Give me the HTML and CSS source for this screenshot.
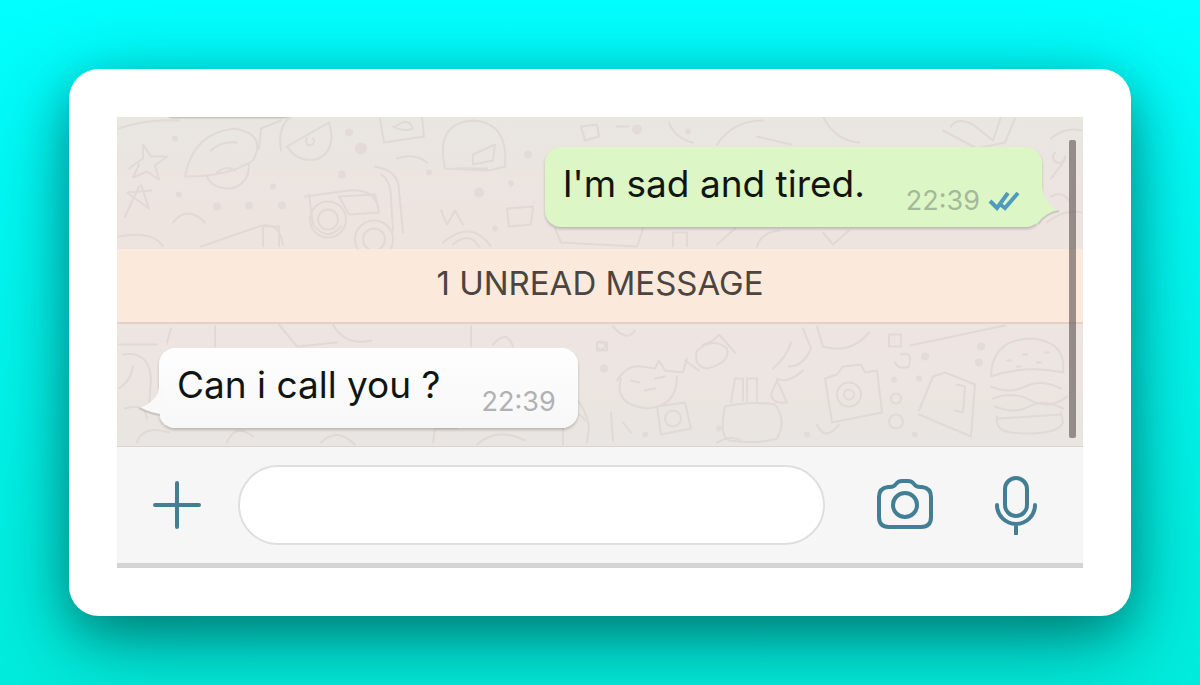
FILE: index.html
```html
<!DOCTYPE html>
<html lang="en">
<head>
    <meta charset="UTF-8">
    <meta name="viewport" content="width=device-width, initial-scale=1.0">
    <title>Chat</title>
    <link rel="stylesheet" href="styles.css">
</head>
<body>
    <main class="card">
        <div class="phone">
            <section class="chat">
                <!-- doodle wallpaper -->
                <svg class="wallpaper" viewBox="0 0 966 330" preserveAspectRatio="xMidYMid slice" aria-hidden="true">
                    <path class="edge" d="M50 0h124q-4 2-10 2H60q-8 0-10-2z"/>
                    <g class="doodles">
                        <path d="M2 12 Q30 2 62 4M12 52l14-10 0-14 8 12 16 0-12 9 4 14-12-8-14 6 6-13M22 70l-14 30M24 68l8 24-22-16 24-2"/>
                        <path d="M68 60q8-44 50-48 32 6 18 32-24 16-66 16M94 34q10-10 26-8M90 60q4 12 24 12 18-4 18-24M100 56q10-8 18-2"/>
                        <path d="M164 34q-4-24 10-34M170 30l42-24q8 26-10 36-20 6-32-12M190 22a4 4 0 1 0 6 0M142 32l2-20 20-8"/>
                        <path d="M263 2l4 24 40-6-2-20M278 10q14-10 18 2-10 4-20-2M280 42q18-6 30 4"/>
                        <path d="M188 80l44-6q28-2 30 22M192 78l4 30q14 18 28 2M258 50q24 4 24 24l4 42M264 58q10 6 10 24l2 32M222 80l36-2 4 18-30 2z"/>
                        <circle cx="211" cy="103" r="18"/><circle cx="211" cy="103" r="10"/>
                        <circle cx="257" cy="123" r="19"/><circle cx="257" cy="123" r="11"/>
                        <path d="M84 130l58-20q20-6 24 18M146 130v-20h16v20M2 120q34-6 44 10M56 106q14-18 32 0"/>
                        <path d="M328 52q-10-46 28-48 36 2 32 46l-16 4zM356 38l22-10-2 16-20 4zM340 52h30"/>
                        <path d="M324 94l6 14 8-14 8 14M390 92l26-2-2 18-22 2zM326 126q28-24 48 4M336 128q16-14 26 2"/>
                        <path d="M464 10l16-2 2 12-14 4zM500 10h12M552 6q6 16 24 20M600 28q16-24 46-24M640 20l34 8M706 0q12 24 36 26"/>
                        <path d="M438 112l6 14 76 4 6-18M556 130v-14h14v14M600 128l18-16M640 130q4-14 22-16M706 116l10 12 16-14"/>
                        <path d="M834 10q6-10 22-2l20 16 8-24M826 14l34 18 28-6 10-24M934 22q14-12 30-8M930 106q18-14 34-10"/>
                        <path d="M934 62l12-16M938 36a6 6 0 1 0 10 4M934 80q12-6 18 4"/>
                        <path d="M2 228h38M6 238q26-4 28 24l-2 30M98 210v20M54 212l-4 14M162 208l18 22 40-4M216 208q12 22 38 16"/>
                        <path d="M2 272q12-8 14-22M8 292q20-6 22 10M20 326q6-18 32-10M110 326q8-20 26-6M204 326q16-16 34 2M316 326l2-14h22M360 328q20-18 48-4"/>
                        <path d="M354 210v20M376 228q14-16 20 2M496 210q14 16 22 4M480 226h10v8h-10z"/>
                        <path d="M500 264q10-16 24-14l14 2 4-8 6 10 18 2 4-14M504 262q-8 26 26 30 30-2 30-32M514 264l8 2M538 262l10-2M528 274l10-2"/>
                        <path d="M568 244l14 10M580 234q16-14 30-2 4 14-20 20-14-2-10-18M586 228q10-2 16-10l16 18"/>
                        <path d="M540 290l28-4 6 26-30 6z"/><circle cx="556" cy="302" r="8"/>
                        <path d="M608 290q-6 30 4 34 28 4 48-2 10-18-2-34-26-4-50 2M614 286l4-24h8v22M630 284v-22h10v22"/>
                        <path d="M660 264l10 22q-14 2-16-8zM656 252q14-12 18-26M672 250q14 0 22-18l-8-20M660 262q10 6 26-8"/>
                        <path d="M708 262l12-4 6-8 18-2 4 8 12-2 5 42-50 10zM700 210l6 20q28 8 46-14"/>
                        <circle cx="732" cy="278" r="12"/><circle cx="732" cy="278" r="5"/>
                        <path d="M700 308q8 18 22 0M772 218h12v12h-12zM784 238q12-4 8 12-10 4-14-4M793 229l95-20M802 294l14-34 12-4 30 12-4 52-52-22M840 268l8 2-2 26-8-2"/>
                        <circle cx="779" cy="282" r="5"/><circle cx="779" cy="305" r="7"/><circle cx="484" cy="229" r="4"/>
                        <path d="M874 258q2-36 42-36 34 4 30 34-38-8-72 4M874 270q18 8 34 0t36 2M876 282q20-8 38 2t36-4M878 290q20 8 34 0t34 2M880 300q-2 14 14 16 46 4 52-10l-2-10M882 302l62-4"/>
                        <path d="M890 244h4M906 238h4M920 246h4M900 250h4M928 236h4"/>
                        <path d="M426 274q38-6 46 36l-2 16M446 328v-24q14-14 22 0M494 296l2 28M506 306l8 10M600 326q14-8 24-2"/>
                    </g>
                    <g class="dots">
                        <circle cx="58" cy="22" r="3"/><circle cx="62" cy="78" r="3"/><circle cx="100" cy="90" r="4"/><circle cx="132" cy="89" r="4"/><circle cx="165" cy="89" r="4"/>
                        <circle cx="156" cy="70" r="3"/><circle cx="225" cy="58" r="4"/><circle cx="232" cy="16" r="4"/><circle cx="244" cy="32" r="6"/><circle cx="312" cy="56" r="3"/><circle cx="362" cy="76" r="5"/>
                        <circle cx="394" cy="67" r="3"/><circle cx="411" cy="38" r="4"/><circle cx="520" cy="13" r="5"/><circle cx="571" cy="15" r="3"/><circle cx="378" cy="112" r="3"/>
                        <circle cx="487" cy="252" r="4"/><circle cx="528" cy="318" r="3"/><circle cx="602" cy="312" r="3"/><circle cx="808" cy="240" r="4"/><circle cx="777" cy="263" r="3"/>
                        <circle cx="802" cy="262" r="3"/><circle cx="864" cy="230" r="4"/><circle cx="862" cy="246" r="4"/><circle cx="690" cy="318" r="3"/><circle cx="798" cy="318" r="3"/>
                    </g>
                </svg>

                <div class="message sent">
                    <p>I'm sad and tired.</p>
                    <time>22:39</time>
                    <svg class="ticks" viewBox="0 0 32 20" aria-label="Read">
                        <path d="M2 10l7 7L20 2M13 14l4 3L30 2"/>
                    </svg>
                    <svg class="tail" viewBox="0 0 24 40" aria-hidden="true">
                        <path d="M6 0Q8 18 23 24Q10 26 0 38V0z"/>
                        <path class="tail-line" d="M2 37Q10 26 23 24"/>
                    </svg>
                </div>

                <div class="unread">1 UNREAD MESSAGE</div>

                <div class="message received">
                    <p>Can i call you ?</p>
                    <time>22:39</time>
                    <svg class="tail" viewBox="0 0 24 40" aria-hidden="true">
                        <path d="M6 0Q8 14 26 20Q14 26 5 27L0 38V0z"/>
                        <path class="tail-line" d="M5 27Q14 26 26 20"/>
                    </svg>
                </div>

                <div class="scrollbar"></div>
            </section>

            <form class="composer">
                <button type="button" class="add" aria-label="Add attachment">
                    <svg width="48" height="48" viewBox="0 0 48 48"><path d="M24 2v44M2 24h44"/></svg>
                </button>
                <input type="text" aria-label="Message">
                <button type="button" aria-label="Camera">
                    <svg width="58" height="52" viewBox="0 0 58 52">
                        <path d="M12 8h2q4 0 6-3 2-3 6-3h6q4 0 6 3 2 3 6 3h2q9 1 9 10v20q0 10-10 10H13q-10 0-10-10V18q0-9 9-10z"/>
                        <circle cx="29" cy="26" r="12"/>
                    </svg>
                </button>
                <button type="button" aria-label="Voice message">
                    <svg width="42" height="60" viewBox="0 0 42 60">
                        <rect x="10" y="3" width="22" height="38" rx="11"/>
                        <path d="M2 30a19 19 0 0 0 38 0M21 49v10"/>
                    </svg>
                </button>
            </form>
        </div>
    </main>
</body>
</html>
```
FILE: styles.css
```css
* {
    box-sizing: border-box;
}

body {
    margin: 0;
    min-height: 100vh;
    padding: 69px;
    font-family: Inter, "Liberation Sans", sans-serif;
    background: linear-gradient(#00ffff, #00ecdc);
}

.card {
    padding: 48px;
    background-color: #fff;
    border-radius: 30px;
    box-shadow: 0 24px 90px rgba(0, 0, 0, 0.35), 0 16px 44px rgba(0, 0, 0, 0.25);
}

.phone {
    background-color: #f6f6f7;
    border-bottom: 5px solid #d3d3d3;
}

/* chat area */
.chat {
    position: relative;
    display: flex;
    flex-direction: column;
    padding: 30px 0 18px;
    overflow: hidden;
    background: linear-gradient(#e9e6e1, #ede4e0 30%, #ede5e1 75%, #e9e5e0);
    border-bottom: 1px solid #d9d3d1;
}

.wallpaper {
    position: absolute;
    top: 0;
    left: 0;
    width: 100%;
    height: 100%;
}

.edge {
    fill: #c9c6c2;
}

.doodles {
    fill: none;
    stroke: #e0d9d5;
    stroke-width: 2;
    stroke-linecap: round;
    stroke-linejoin: round;
}

.dots {
    fill: #e3dbd7;
}

.message {
    position: relative;
    display: flex;
    align-items: center;
    height: 80px;
    padding: 0 22px 0 18px;
    border-radius: 16px;
    box-shadow: 0 2px 3px rgba(0, 0, 0, 0.2);
}

.message p {
    margin: 0 41px 6px 0;
    font-size: 37px;
    line-height: 44px;
    color: #111512;
}

.message time {
    align-self: flex-end;
    margin-bottom: 10px;
    font-size: 27px;
    line-height: 32px;
    color: #b1b1b3;
}

.sent {
    align-self: flex-end;
    margin-right: 41px;
    background-color: #dcf7c5;
}

.sent time {
    color: #a5b899;
}

.received {
    align-self: flex-start;
    margin-left: 42px;
    background: linear-gradient(#fefefe, #f7f7f8);
}

.ticks {
    align-self: flex-end;
    width: 32px;
    height: 20px;
    margin: 0 0 16px 8px;
    fill: none;
    stroke: #4f9bbd;
    stroke-width: 4;
}

.tail {
    position: absolute;
    right: -18px;
    bottom: 0;
    width: 24px;
    height: 40px;
    overflow: visible;
    fill: #dcf7c5;
}

.received .tail {
    right: auto;
    left: -18px;
    fill: #f9f9fa;
    transform: scaleX(-1);
}

.tail .tail-line {
    fill: none;
    stroke: #cbc8c3;
    stroke-width: 2;
}

.unread {
    position: relative;
    margin: 22px 0 24px;
    padding: 14px 0 19px;
    text-align: center;
    font-size: 33px;
    line-height: 40px;
    color: #4b443f;
    background-color: #fbeadb;
    border-bottom: 2px solid #e6cfc5;
}

.scrollbar {
    position: absolute;
    top: 23px;
    right: 7px;
    bottom: 8px;
    width: 7px;
    border-radius: 2px;
    background-color: rgba(90, 80, 78, 0.6);
}

/* bottom bar */
.composer {
    display: flex;
    align-items: center;
    padding: 18px 46px 18px 36px;
}

.composer input {
    flex: 1;
    min-width: 0;
    height: 80px;
    margin: 0 51px 0 37px;
    padding: 0 32px;
    font-family: inherit;
    font-size: 37px;
    background-color: #fff;
    border: 2px solid #dfdfe0;
    border-radius: 40px;
    outline: none;
}

.composer button {
    display: flex;
    padding: 0;
    border: none;
    background: none;
    cursor: pointer;
}

.composer button + button {
    margin-left: 61px;
}

.composer svg {
    fill: none;
    stroke: #437f94;
    stroke-width: 4;
    stroke-linecap: round;
    stroke-linejoin: round;
}
```
